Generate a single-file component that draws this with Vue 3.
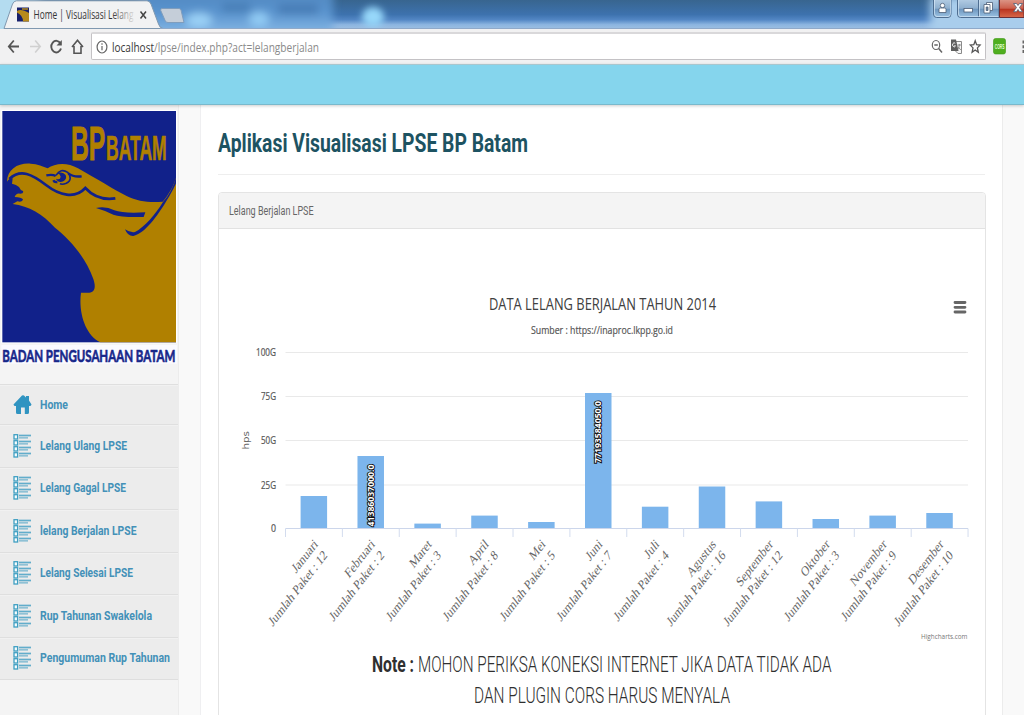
<script setup>
import { h } from 'vue'

// Text condensed or widened to an exact width.
const FitText = (props) =>
  h('svg', { width: props.w + 2, height: props.h, 'aria-label': props.text }, [
    h('text', { x: 0, y: props.base, textLength: props.w, lengthAdjust: 'spacingAndGlyphs' }, props.text),
  ])
FitText.props = ['text', 'w', 'h', 'base']

const menu = [
  { label: 'Home', w: 28, home: true },
  { label: 'Lelang Ulang LPSE', w: 87 },
  { label: 'Lelang Gagal LPSE', w: 86 },
  { label: 'lelang Berjalan LPSE', w: 96.5 },
  { label: 'Lelang Selesai LPSE', w: 93 },
  { label: 'Rup Tahunan Swakelola', w: 112 },
  { label: 'Pengumuman Rup Tahunan', w: 130 },
]

const left = 285.5
const step = 56.88
const bars = [
  ['Januari', 12, 496],
  ['Februari', 2, 456],
  ['Maret', 3, 523.6],
  ['April', 8, 515.6],
  ['Mei', 5, 522],
  ['Juni', 7, 393],
  ['Juli', 4, 506.7],
  ['Agustus', 16, 486.5],
  ['September', 12, 501.4],
  ['Oktober', 3, 519],
  ['November', 9, 515.6],
  ['Desember', 10, 513],
].map(([month, count, top], i) => ({ month, count, top, x: left + step * i + 15.1, c: left + step * (i + 0.5) }))

const grid = [
  ['100G', 352.5, 20],
  ['75G', 396.5, 15],
  ['50G', 440.5, 15],
  ['25G', 485, 15],
  ['0', 528.5, 5],
]
</script>

<template>
  <div class="window">
    <header class="titlebar">
      <svg width="1024" height="29" viewBox="0 0 1024 29">
        <defs>
          <linearGradient id="sky" x1="0" y1="0" x2="0" y2="1">
            <stop offset="0" stop-color="#38658f" />
            <stop offset=".5" stop-color="#3d72ae" />
            <stop offset=".68" stop-color="#5286c4" />
            <stop offset=".85" stop-color="#8cb5e0" />
            <stop offset="1" stop-color="#9dbfe2" />
          </linearGradient>
          <linearGradient id="haze" x1="0" y1="0" x2="0" y2="1">
            <stop offset="0" stop-color="#4f86bd" />
            <stop offset=".5" stop-color="#5a94cf" />
            <stop offset="1" stop-color="#8fbfea" />
          </linearGradient>
          <linearGradient id="glass" x1="0" y1="0" x2="0" y2="1">
            <stop offset="0" stop-color="#b4cde4" />
            <stop offset=".5" stop-color="#8fb0cf" />
            <stop offset=".55" stop-color="#6f97bf" />
            <stop offset="1" stop-color="#9cc3e4" />
          </linearGradient>
          <linearGradient id="red" x1="0" y1="0" x2="0" y2="1">
            <stop offset="0" stop-color="#dd9a8b" />
            <stop offset=".5" stop-color="#cc5f4c" />
            <stop offset=".55" stop-color="#b93420" />
            <stop offset="1" stop-color="#d8684a" />
          </linearGradient>
          <linearGradient id="fade" x1="112" x2="134" y1="0" y2="0" gradientUnits="userSpaceOnUse">
            <stop offset="0" stop-color="#333" />
            <stop offset="1" stop-color="#333" stop-opacity=".1" />
          </linearGradient>
          <filter id="soft" x="-50%" y="-80%" width="200%" height="260%"><feGaussianBlur stdDeviation="4" /></filter>
          <filter id="soft2" x="-80%" y="-80%" width="260%" height="260%"><feGaussianBlur stdDeviation="3.500" /></filter>
        </defs>
        <rect width="1024" height="29" fill="url(#sky)" />
        <g filter="url(#soft)">
          <rect x="140" y="-12" width="193" height="50" fill="url(#haze)" />
          <rect x="-10" y="-10" width="50" height="50" fill="#b4dcf0" />
          <rect x="222" y="4" width="28" height="8" fill="#457bb4" />
          <rect x="278" y="5" width="40" height="9" fill="#4479b2" />
          <ellipse cx="199" cy="20" rx="13" ry="7" fill="#9bd2f7" />
          <ellipse cx="259" cy="19" rx="10" ry="7" fill="#92ccf5" />
          <rect x="930" y="-4" width="110" height="40" fill="#a9cdec" />
        </g>
        <ellipse cx="373" cy="17" rx="11" ry="10" fill="#97d8fa" filter="url(#soft2)" />
        <path d="M4 28.5 L12.5 4 Q14 .8 16.5 .8 H147 Q149.500 .8 151 4 L158.500 24 Q160 28.500 163 28.500Z" fill="#f1f2f3" stroke="#7f98b0" />
        <path d="M161.500 8.500 H179 Q180.500 8.500 181 10 L184 22.500 H168 Q166 22.500 165.300 21 L160.500 10Z" fill="#c5ced9" stroke="#7f9dbd" />
        <path d="M160 28.500 H1024" stroke="#8fa9c9" />
        <g>
          <rect x="17" y="7.500" width="12" height="14" fill="#17206c" />
          <path d="M17 11q4-3 12 2v8.500h-6q0-6-6-9Z" fill="#b68a1c" />
          <path d="M22 9h6" stroke="#b68a1c" stroke-width="1.500" />
        </g>
        <text x="33.500" y="19" class="tab-text" textLength="100" lengthAdjust="spacingAndGlyphs" fill="url(#fade)">Home | Visualisasi Lelang</text>
        <path d="M140.500 11.500l5.500 7M146 11.500l-5.500 7" stroke="#444" stroke-width="1.500" />
        <path d="M933.500 -1V14q0 3.500 3 3.500H948q3 0 3-3.500V-1Z" fill="url(#glass)" stroke="#4f6e91" />
        <path d="M934.500 -1V13.500q0 3 2.500 3h11q2.500 0 2.500-3V-1" fill="none" stroke="#d9eaf8" stroke-width=".7" />
        <path d="M957.500 -1V14q0 3.500 3 3.500H999V-1Z" fill="url(#glass)" stroke="#4f6e91" />
        <path d="M999.500 -1V17.500H1024V-1Z" fill="url(#red)" stroke="#6b3038" />
        <path d="M978.500 0V17" stroke="#4f6e91" />
        <path d="M979.500 0V17M958.500 0V14q0 2.500 2 2.500H998.500" stroke="#d2e5f5" stroke-width=".7" fill="none" />
        <g fill="#fff" stroke="#4c5d75" stroke-width=".8">
          <circle cx="942.500" cy="5.500" r="2.200" />
          <path d="M939 12.500v-3.200q0-1.300 1.500-1.300h4q1.500 0 1.500 1.300v3.200Z" />
          <rect x="964" y="8.500" width="8.500" height="3.500" />
          <path d="M986.500 2.500h6v8h-6Z" />
          <path d="M984 4.500h6v8.500h-6Z" />
          <path d="M986.200 7h1.800v3.500h-1.800Z" fill="#6b86a4" />
          <path d="M1013.500 3.500h3l1.500 2 1.500-2h3l-3 4 3 4.200h-3l-1.500-2.200-1.500 2.200h-3l3-4.200Z" />
        </g>
      </svg>
    </header>

    <nav class="toolbar">
      <svg class="nav-icons" width="91" height="35" viewBox="0 29 91 35" fill="none">
        <path d="M19 46.500H9M13.800 40.500l-5 6 5 6" stroke="#555" stroke-width="1.800" />
        <path d="M30 46.500h9.500M35.200 40.500l5 6-5 6" stroke="#d0d0d0" stroke-width="1.600" />
        <path d="M60.500 43.500A5 5.800 0 1 0 61 48.500" stroke="#555" stroke-width="1.900" />
        <path d="M61.800 40v5.500h-5.300Z" fill="#555" />
        <path d="M72 47l5.500-6.700 5.500 6.700M74 46v7.300h7V46" stroke="#555" stroke-width="1.600" />
      </svg>
      <div class="address">
        <svg class="info" width="12" height="16" viewBox="0 0 12 16" fill="none" stroke="#666" stroke-width="1.200">
          <ellipse cx="6" cy="8" rx="4.900" ry="6" /><path d="M6 7v4.300M6 4.300v1.500" />
        </svg>
        <FitText class="url host" text="localhost" :w="42" :h="24" :base="16.500" />
        <FitText class="url path" text="/lpse/index.php?act=lelangberjalan" :w="165" :h="24" :base="16.500" />
        <svg class="tools" width="52" height="20" viewBox="930 37 52 20" fill="none">
          <ellipse cx="936" cy="45" rx="3.700" ry="4.500" stroke="#666" stroke-width="1.200" />
          <path d="M938.700 48.500l3.300 4M934.300 45h3.500" stroke="#666" stroke-width="1.500" />
          <path d="M955 41.500h6.500v12h-3.500l-3-3Z" fill="#f6f6f6" stroke="#8a8a8a" />
          <path d="M951 39.500h5l2.500 11.500H951Z" fill="#5e5e5e" />
          <path d="M955.200 43.300a1.600 2 0 1 0 .3 2.600h-1.500" stroke="#fff" stroke-width=".9" />
          <path d="M957.500 45h3.500M959.300 44v1q-.3 3-1.500 4.500M958.300 47l2.500 3" stroke="#777" stroke-width=".8" />
          <path d="M975.200 40.700l1.400 4 3.500.4-2.700 2.800.9 4.400-3.100-2.300-3.100 2.300.9-4.400-2.700-2.800 3.500-.4Z" stroke="#555" stroke-width="1.300" />
        </svg>
      </div>
      <svg width="38" height="35" viewBox="986 29 38 35">
        <rect x="993.500" y="38.500" width="12" height="15.500" rx="2" fill="#4fae1f" stroke="#3d9714" stroke-width=".6" />
        <text x="994.800" y="49" class="cors" textLength="9.600" lengthAdjust="spacingAndGlyphs">CORS</text>
        <path d="M1022.500 40.500h2v3h-2zM1022.500 45.300h2v3h-2zM1022.500 50h2v3h-2z" fill="#666" />
      </svg>
    </nav>

    <div class="banner"></div>

    <div class="page">
      <aside class="sidebar">
        <svg class="logo" width="179" height="279" viewBox="0 0 537 837">
          <rect x="4" y="15" width="527" height="700" fill="#fff" />
          <rect x="7" y="18" width="521" height="694" fill="#11218a" />
          <path
            fill="#b08000"
            d="M21 230C22 192 55 173 92 176C112 177 130 184 143 190C165 174 202 171 234 190C290 221 345 256 380 273C413 290 450 293 488 290C507 268 522 240 528 218V712H301C255 690 235 622 243 563H268C285 561 288 546 280 522C256 455 208 402 165 368C128 328 87 303 38 297L52 289Q68 293 69 283Q65 277 44 276Q48 263 61 266Q72 266 69 258Q61 256 57 246Q49 238 36 236L38 220Q28 220 21 230Z"
          />
          <g fill="none" stroke="#11218a" stroke-width="8">
            <path d="M28 222C62 190 96 208 138 240C178 271 225 283 256 249C278 273 306 286 346 280" />
            <path d="M139 211Q158 207 167 213M160 226Q163 233 172 231M205 205Q220 217 245 214" stroke-width="7" />
            <path d="M168 211Q182 188 203 202Q220 224 199 235Q186 240 180 236" stroke-width="5" />
          </g>
          <path d="M172 205Q188 198 197 210Q202 222 190 229Q174 235 168 221Q181 226 182 215Q181 208 172 205Z" fill="#11218a" />
          <path d="M288 309Q318 303 343 316Q370 326 436 322L431 336Q364 338 340 329Q316 317 288 309Z" fill="#11218a" />
          <path d="M528 218C520 246 507 270 489 291C466 329 433 367 405 381Q391 384 375 373Q383 394 400 393C435 386 474 330 497 292C512 268 523 247 528 235Z" fill="#11218a" />
          <text x="213" y="165" class="logo-big" textLength="103" lengthAdjust="spacingAndGlyphs">BP</text>
          <text x="318" y="165" class="logo-small" textLength="182" lengthAdjust="spacingAndGlyphs">BATAM</text>
          <rect x="4" y="720" width="527" height="56" fill="#fafaff" />
          <text x="7" y="770" class="logo-caption" textLength="519" lengthAdjust="spacingAndGlyphs">BADAN PENGUSAHAAN BATAM</text>
        </svg>
        <ul class="menu">
          <li v-for="m in menu" :key="m.label" :class="{ first: m.home }">
            <svg v-if="m.home" width="20" height="26" viewBox="0 0 20 26">
              <path d="M0.500 12.500L9 3.500Q10 2.800 11 3.500L13 5.500V4h3v4.500L18.500 12.500Q18 14.500 16 14V20.500Q16 22 14.500 22H11.800V15.500H8V22H4.500Q3 22 3 20.500V14Q1 14.500 .5 12.500Z" fill="#3094c1" />
            </svg>
            <svg v-else width="20" height="26" viewBox="0 0 20 26">
              <g v-for="i in 4" :key="i" :transform="`translate(0 ${(i - 1) * 6})`">
                <rect x="1" y="1.700" width="3.600" height="4.300" fill="#f5fbfd" stroke="#3f9fc2" stroke-width="1.300" />
                <path d="M6 2.500h12" stroke="#62adcb" stroke-width="1.700" />
                <path d="M6 4.800h9" stroke="#8fc1d5" stroke-width="1.700" />
              </g>
            </svg>
            <FitText :text="m.label" :w="m.w" :h="24" :base="16" />
          </li>
        </ul>
      </aside>

      <main class="content">
        <h1><FitText text="Aplikasi Visualisasi LPSE BP Batam" :w="310" :h="40" :base="28" /></h1>
        <section class="panel">
          <div class="panel-head">
            <FitText text="Lelang Berjalan LPSE" :w="84.500" :h="24" :base="16" />
          </div>
          <svg class="chart" width="766" height="500" viewBox="219 229 766 500">
            <text x="489" y="310" class="title" textLength="227" lengthAdjust="spacingAndGlyphs">DATA LELANG BERJALAN TAHUN 2014</text>
            <text x="531" y="334.300" class="subtitle" textLength="142" lengthAdjust="spacingAndGlyphs">Sumber : https://inaproc.lkpp.go.id</text>
            <path d="M955 302.500h10M955 307.300h10M955 312h10" stroke="#666" stroke-width="2.800" stroke-linecap="round" />
            <g v-for="g in grid" :key="g[0]">
              <path v-if="g[0] !== '0'" :d="`M${left} ${g[1]}H968`" stroke="#e9e9e9" />
              <text :x="276 - g[2]" :y="g[1] + 3.700" class="tick" :textLength="g[2]" lengthAdjust="spacingAndGlyphs">{{ g[0] }}</text>
            </g>
            <text transform="translate(249 449.500) rotate(-90)" class="axis" textLength="18.500" lengthAdjust="spacingAndGlyphs">hps</text>
            <rect v-for="b in bars" :key="b.month" :x="b.x" :y="b.top" width="26.500" :height="528.500 - b.top" fill="#7cb5ec" />
            <path d="M285.500 528.500H968" stroke="#ccd6eb" />
            <path v-for="i in 13" :key="i" :d="`M${left + step * (i - 1)} 528.500v8.500`" stroke="#d3dcee" />
            <text transform="translate(374.300 526.500) rotate(-90)" class="value" textLength="62" lengthAdjust="spacingAndGlyphs">41386037000.0</text>
            <text transform="translate(600.800 463) rotate(-90)" class="value" textLength="62" lengthAdjust="spacingAndGlyphs">77193584050.0</text>
            <g v-for="b in bars" :key="b.month" class="cat" :transform="`translate(${b.c + 4.500} 545) scale(.73 .94) rotate(-45)`">
              <text>{{ b.month }}</text>
              <text x="1" y="17.500">Jumlah Paket : {{ b.count }}</text>
            </g>
            <text x="921" y="639.300" class="credit" textLength="46.500" lengthAdjust="spacingAndGlyphs">Highcharts.com</text>
            <text x="372" y="672" class="note strong" textLength="42" lengthAdjust="spacingAndGlyphs">Note :</text>
            <text x="418" y="672" class="note" textLength="413.500" lengthAdjust="spacingAndGlyphs">MOHON PERIKSA KONEKSI INTERNET JIKA DATA TIDAK ADA</text>
            <text x="474" y="703.300" class="note" textLength="256" lengthAdjust="spacingAndGlyphs">DAN PLUGIN CORS HARUS MENYALA</text>
          </svg>
        </section>
      </main>
    </div>
  </div>
</template>

<style>
html, body { margin: 0; overflow: hidden; }
</style>

<style scoped>
.window { width: 1024px; height: 715px; overflow: hidden; display: flex; flex-direction: column; background: #f9f9f9; }
svg { display: block; flex: none; overflow: visible; }
.titlebar { height: 29px; flex: none; overflow: hidden; }
.tab-text { font: 12px "Open Sans", sans-serif; }
.toolbar { height: 35px; flex: none; display: flex; background: #f1f1f2; }
.address { box-sizing: border-box; width: 895px; height: 28px; margin-top: 3px; display: flex; align-items: center; background: #fff; border: 1px solid #c4c2c5; border-top: 2px solid #d9d8da; border-radius: 2px; }
.info { margin: 0 4px; }
.url { font: 13px "Open Sans", sans-serif; margin-right: -2px; }
.host { fill: #383838; }
.path { fill: #8a8a8a; }
.tools { margin-left: auto; margin-right: 3px; }
.cors { font: bold 7px "Liberation Sans", sans-serif; fill: #e8ffd8; }
.banner { box-sizing: border-box; height: 41px; flex: none; background: #85d5ed; border-top: 1px solid #a9c6ce; border-bottom: 1px solid #79b9cc; box-shadow: 0 1px 3px rgba(0, 0, 0, .2); position: relative; }
.page { flex: 1; min-height: 0; display: flex; overflow: hidden; }
.sidebar { box-sizing: border-box; width: 179px; background: #f4f4f4; border-right: 1px solid #ececec; }
.logo-big { font: bold 147px "Liberation Sans", sans-serif; fill: #b08000; stroke: #b08000; stroke-width: 3px; }
.logo-small { font: bold 103px "Liberation Sans", sans-serif; fill: #b08000; stroke: #b08000; stroke-width: 2px; }
.logo-caption { font: bold 53px Lato, sans-serif; fill: #17278a; stroke: #17278a; stroke-width: 2px; }
.menu { list-style: none; margin: 0; padding: 0; border-bottom: 1px solid #dedede; background: #ececec; }
.menu li { box-sizing: border-box; height: 42.5px; padding-left: 13px; display: flex; align-items: center; gap: 7px; border-top: 1px solid #dfdfdf; box-shadow: inset 0 1px #f1f1f1; font: bold 12.5px Roboto, sans-serif; fill: #4391b8; }
.menu .first { height: 40px; }
.content { box-sizing: border-box; width: 803px; margin-left: 21px; padding: 0 17px; background: #fff; border-left: 1px solid #efeff1; border-right: 1px solid #ececec; }
h1 { margin: 0; padding: 19px 0 10px; border-bottom: 1px solid #eee; font: bold 25.5px Roboto, sans-serif; fill: #1d5362; }
.panel { box-sizing: border-box; width: 768px; margin-top: 17px; border: 1px solid #e4e4e4; border-radius: 4px; }
.panel-head { box-sizing: border-box; height: 36px; padding: 6px 10px; background: #f4f4f4; border-bottom: 1px solid #e2e2e2; border-radius: 3px 3px 0 0; font: 12.3px Roboto, sans-serif; fill: #666; }
.title { font: 17px "Open Sans", sans-serif; fill: #404040; }
.subtitle { font: 10.5px "Open Sans", sans-serif; fill: #555; stroke: #555; stroke-width: .2px; }
.tick { font: 10px "Open Sans", sans-serif; fill: #555; stroke: #555; stroke-width: .2px; }
.axis { font: 9px "DejaVu Sans", sans-serif; fill: #666; }
.value { font: bold 9px "Open Sans", sans-serif; fill: #fff; stroke: #111; stroke-width: 2px; paint-order: stroke; }
.cat { font: 15px "Liberation Serif", serif; fill: #666; text-anchor: end; }
.credit { font: 8px "Open Sans", sans-serif; fill: #777; }
.note { font: 300 22px Roboto, sans-serif; fill: #2f2f2f; }
.strong { font-weight: bold; }
</style>
